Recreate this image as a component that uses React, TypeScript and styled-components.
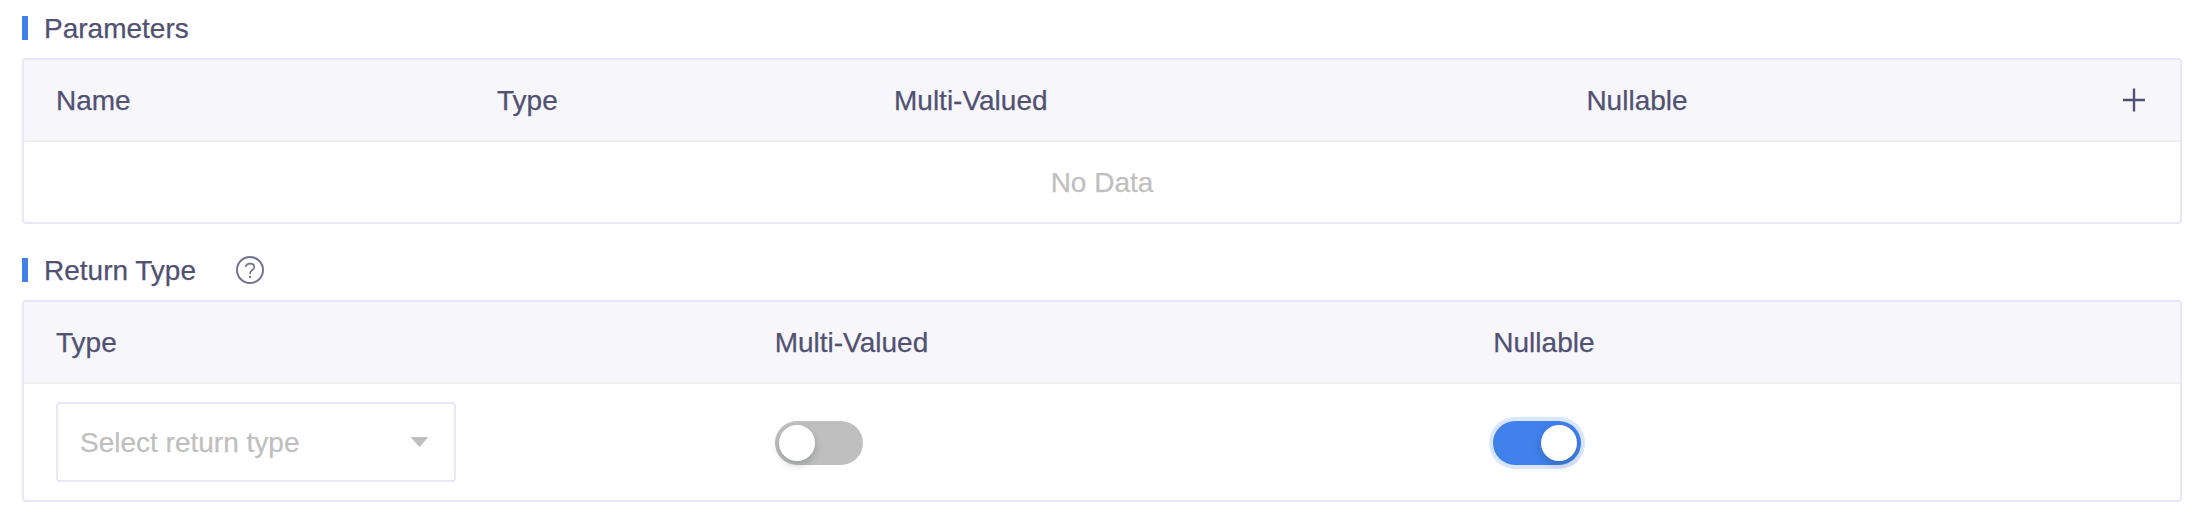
import React from 'react';
import styled, { createGlobalStyle } from 'styled-components';

const Global = createGlobalStyle`
  body {
    margin: 0;
    background: #fff;
    color: #515172;
    font: 28px/40px "Liberation Sans", Arial, Helvetica, sans-serif;
    -webkit-text-stroke: 0.25px currentColor;
  }
  * { box-sizing: border-box; }
`;

const Page = styled.main`
  padding: 8px 24px 26px 22px;
`;

const Section = styled.section`
  & + & { margin-top: 26px; }
`;

const SectionTitle = styled.h2`
  display: flex;
  align-items: center;
  height: 40px;
  margin: 0 0 10px;
  font-size: 28px;
  font-weight: 400;

  &::before {
    content: '';
    width: 6px;
    height: 24px;
    margin-right: 16px;
    background: #4080ea;
  }
`;

const Label = styled.span`
  display: block;
  padding-top: 2px;
`;

const HelpButton = styled.span`
  display: flex;
  margin-left: 40px;
`;

const Table = styled.div`
  border: 2px solid #e8e7f7;
  border-radius: 4px;
  overflow: hidden;
`;

const Row = styled.div<{ $columns: string; $height: number }>`
  display: grid;
  grid-template-columns: ${(p) => p.$columns};
  align-items: center;
  height: ${(p) => p.$height}px;
`;

const HeaderRow = styled(Row)`
  background: #f6f6fb;
  border-bottom: 2px solid #efefef;
`;

const Cell = styled.div`
  padding-left: 32px;
`;

const AddCell = styled.div`
  display: flex;
  justify-content: flex-end;
  padding-right: 35px;
`;

const EmptyRow = styled.div`
  height: 80px;
  line-height: 82px;
  text-align: center;
  color: #bfbfbf;
`;

const Select = styled.div`
  display: flex;
  align-items: center;
  justify-content: space-between;
  width: 400px;
  height: 80px;
  padding: 0 26px 0 22px;
  border: 2px solid #e8e7f7;
  border-radius: 4px;
  color: #bfbfbf;
`;

const Switch = styled.div<{ $on?: boolean }>`
  display: flex;
  justify-content: ${(p) => (p.$on ? 'flex-end' : 'flex-start')};
  width: 88px;
  height: 44px;
  margin-top: 2px;
  padding: 4px;
  border-radius: 22px;
  background: ${(p) => (p.$on ? '#4080ea' : '#bfbfbf')};
  box-shadow: ${(p) => (p.$on ? '0 0 0 4px #d9e6fb' : 'none')};
`;

const Knob = styled.span`
  width: 36px;
  height: 36px;
  border-radius: 50%;
  background: #fff;
  box-shadow: 0 4px 8px rgba(0, 35, 11, 0.2);
`;

const PARAM_COLUMNS = '441px 397px 692.4px 1fr 100px';
const RETURN_COLUMNS = 'repeat(3, 1fr)';

const HelpIcon = () => (
  <svg width="28" height="28" viewBox="0 0 28 28" fill="none" stroke="#747490">
    <circle cx="14" cy="14" r="13" strokeWidth="2" />
    <path
      d="M9.8 11.1C9.8 8.8 11.5 7.6 14 7.6s4.3 1.3 4.3 3.5c0 1.5-.8 2.3-2.2 3.2-1.5 1-2.1 1.6-2.1 3.6"
      strokeWidth="1.7"
    />
    <circle cx="14" cy="20.9" r="1.2" fill="#747490" stroke="none" />
  </svg>
);

const PlusIcon = () => (
  <svg width="22" height="24" viewBox="0 0 22 24" stroke="#515172" strokeWidth="2.4">
    <path d="M0 12H22M11 .5V23.5" />
  </svg>
);

const CaretIcon = () => (
  <svg width="17" height="10" viewBox="0 0 17 10" fill="#bfbfbf">
    <path d="M.7 0h15.6c.6 0 .8.5.4.9L9 9.6q-.5.6-1 0L.3.9C-.1.5.1 0 .7 0Z" />
  </svg>
);

export default function App() {
  return (
    <Page>
      <Global />
      <Section>
        <SectionTitle><Label>Parameters</Label></SectionTitle>
        <Table>
          <HeaderRow $columns={PARAM_COLUMNS} $height={82}>
            <Cell><Label>Name</Label></Cell>
            <Cell><Label>Type</Label></Cell>
            <Cell><Label>Multi-Valued</Label></Cell>
            <Cell><Label>Nullable</Label></Cell>
            <AddCell><PlusIcon /></AddCell>
          </HeaderRow>
          <EmptyRow>No Data</EmptyRow>
        </Table>
      </Section>
      <Section>
        <SectionTitle>
          <Label>Return Type</Label>
          <HelpButton><HelpIcon /></HelpButton>
        </SectionTitle>
        <Table>
          <HeaderRow $columns={RETURN_COLUMNS} $height={82}>
            <Cell><Label>Type</Label></Cell>
            <Cell><Label>Multi-Valued</Label></Cell>
            <Cell><Label>Nullable</Label></Cell>
          </HeaderRow>
          <Row $columns={RETURN_COLUMNS} $height={116}>
            <Cell>
              <Select>
                <Label>Select return type</Label>
                <CaretIcon />
              </Select>
            </Cell>
            <Cell><Switch><Knob /></Switch></Cell>
            <Cell><Switch $on><Knob /></Switch></Cell>
          </Row>
        </Table>
      </Section>
    </Page>
  );
}
